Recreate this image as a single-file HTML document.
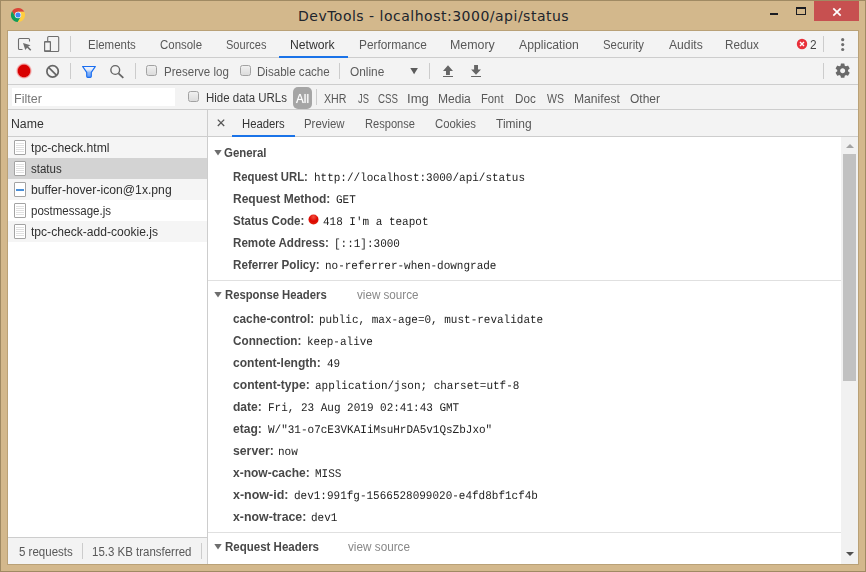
<!DOCTYPE html>
<html>
<head>
<meta charset="utf-8">
<title>DevTools - localhost:3000/api/status</title>
<style>
*{box-sizing:border-box;margin:0;padding:0}
html,body{width:866px;height:572px;overflow:hidden;background:#d3b88c}
body{font-family:"Liberation Sans",sans-serif;font-size:12px;color:#333;position:relative}
.a,.t,.m,.b{position:absolute;white-space:pre;display:block}
.t,.b{font-family:"Liberation Sans",sans-serif;font-size:12px;line-height:14px;color:#585858;transform-origin:0 50%}
.b{font-weight:bold;color:#484848}
.m{font-family:"Liberation Mono",monospace;font-size:11.7px;line-height:14px;color:#222;text-rendering:geometricPrecision;transform-origin:0 50%;transform:scaleX(0.9400)}
#frame{position:absolute;left:0;top:0;width:866px;height:572px;background:#d3b88c;border:1px solid #a08a63}
#title{position:absolute;left:298px;top:6px;white-space:pre;font-family:"DejaVu Sans","Liberation Sans",sans-serif;font-size:14px;letter-spacing:0.5px;color:#20242c;line-height:20px}
#content{position:absolute;left:8px;top:31px;width:850px;height:533px;background:#fff;outline:1px solid #b9a177}
.bar{position:absolute;left:8px;width:850px;background:#f3f3f3;border-bottom:1px solid #cdcdcd}
.v{position:absolute;width:1px;background:#ccc}
.cb{position:absolute;width:11px;height:11px;border:1px solid #a2a2a2;border-radius:2.5px;background:linear-gradient(#f0f0f0,#dcdcdc)}
.row{position:absolute;left:8px;width:199px;height:21px;background:#f5f5f5}
.fi{position:absolute;left:14px;width:12px;height:15px;border:1px solid #a3a3a3;border-radius:1px;background:#fff}
.fi i{position:absolute;left:1px;right:1px;height:1px;background:#e0e0e0}
.hl{position:absolute;left:208px;width:633px;height:1px;background:#e0e0e0}
.tri{position:absolute;width:0;height:0;border-left:3.5px solid transparent;border-right:3.5px solid transparent;border-top:6px solid #6e6e6e}
</style>
</head>
<body>
<div id="frame"></div>
<svg class="a" style="left:10px;top:7px" width="16" height="16" viewBox="0 0 16 16">
  <path d="M8.00 4.75 L14.31 4.75 A7.1 7.1 0 0 0 2.03 4.16 L5.19 9.62 Z" fill="#db4437"/>
  <path d="M10.81 9.62 L7.66 15.09 A7.1 7.1 0 0 0 14.31 4.75 L8.00 4.75 Z" fill="#ffcd40"/>
  <path d="M5.19 9.62 L2.03 4.16 A7.1 7.1 0 0 0 7.66 15.09 L10.81 9.62 Z" fill="#0f9d58"/>
  <circle cx="8" cy="8" r="3.25" fill="#f1f1f1"/>
  <circle cx="8" cy="8" r="2.5" fill="#4285f4"/>
</svg>
<div id="title">DevTools - localhost:3000/api/status</div>
<div class="a" style="left:770px;top:13px;width:8px;height:2px;background:#1a1c22"></div>
<div class="a" style="left:796px;top:7px;width:10px;height:8px;border:1px solid #1a1c22;border-top-width:2px"></div>
<div class="a" style="left:814px;top:1px;width:45px;height:20px;background:#c75050"></div>
<svg class="a" style="left:831.9px;top:6.9px" width="10" height="10" viewBox="0 0 10 10"><path d="M1.3 1.3 L8.7 8.7 M8.7 1.3 L1.3 8.7" stroke="#fff" stroke-width="1.7" fill="none"/></svg>

<div id="content"></div>
<div class="bar" style="top:31px;height:27px"></div>
<div class="bar" style="top:58px;height:27px"></div>
<div class="bar" style="top:85px;height:25px"></div>
<div class="bar" style="top:110px;height:27px"></div>

<!-- tab bar icons -->
<svg class="a" style="left:16px;top:35px" width="48" height="18" viewBox="0 0 48 18">
  <path d="M6.5 14.5 H3.5 a1 1 0 0 1 -1 -1 V4.5 a1 1 0 0 1 1 -1 H12.5 a1 1 0 0 1 1 1 V6.5" fill="none" stroke="#6e6e6e" stroke-width="1.1"/>
  <path d="M7 8 L14.5 10.2 L12.2 11.6 L15.3 14.7 L14.2 15.8 L11.1 12.7 L9.3 15 Z" fill="#6e6e6e"/>
  <rect x="31.7" y="1.5" width="11" height="15" rx="1" fill="none" stroke="#6e6e6e" stroke-width="1.1"/>
  <rect x="28" y="6" width="7" height="11" rx="1" fill="#6e6e6e"/>
  <rect x="29.2" y="7.6" width="4.6" height="7.6" fill="#f3f3f3"/>
</svg>
<div class="v" style="left:70px;top:36px;height:16px"></div>
<div class="a" style="left:279px;top:56px;width:69px;height:2px;background:#1a73e8"></div>
<svg class="a" style="left:796px;top:38px" width="12" height="12" viewBox="0 0 12 12"><circle cx="6" cy="6" r="5.2" fill="#e8303a"/><path d="M4 4 L8 8 M8 4 L4 8" stroke="#fff" stroke-width="1.4"/></svg>
<div class="v" style="left:823px;top:36px;height:16px"></div>
<svg class="a" style="left:840px;top:37px" width="6" height="16" viewBox="0 0 6 16"><circle cx="2.7" cy="2.7" r="1.6" fill="#6e6e6e"/><circle cx="2.7" cy="7.6" r="1.6" fill="#6e6e6e"/><circle cx="2.7" cy="12.5" r="1.6" fill="#6e6e6e"/></svg>

<!-- toolbar icons -->
<svg class="a" style="left:14px;top:60px" width="114" height="22" viewBox="-2 -2 114 22">
  <defs>
    <radialGradient id="rec" cx="0.5" cy="0.5" r="0.5"><stop offset="0.7" stop-color="#d80000"/><stop offset="0.77" stop-color="#e55" stop-opacity="0.9"/><stop offset="0.88" stop-color="#ee9090" stop-opacity="0.5"/><stop offset="1" stop-color="#f3c0c0" stop-opacity="0"/></radialGradient>
    <linearGradient id="fun" x1="0" y1="0" x2="0" y2="1"><stop offset="0" stop-color="#f4f6fb"/><stop offset="0.3" stop-color="#e3ecfb"/><stop offset="0.55" stop-color="#8db8f8"/><stop offset="1" stop-color="#5a97f6"/></linearGradient>
  </defs>
  <circle cx="8" cy="8.9" r="8.3" fill="url(#rec)"/>
  <circle cx="36.6" cy="9.4" r="5.7" fill="none" stroke="#666" stroke-width="1.7"/>
  <path d="M32.6 5.4 L40.6 13.4" stroke="#666" stroke-width="1.7"/>
  <path d="M66.6 4.45 H79.4 L75.3 10.4 V14.3 a1 1 0 0 1 -1 1 H71.7 a1 1 0 0 1 -1 -1 V10.4 Z" fill="url(#fun)" stroke="#1a6ef0" stroke-width="1.15" stroke-linejoin="round"/>
  <circle cx="99.25" cy="8" r="4.4" fill="none" stroke="#666" stroke-width="1.4"/>
  <path d="M102.5 11.4 L107.3 15.9" stroke="#666" stroke-width="1.8"/>
</svg>
<div class="v" style="left:70px;top:63px;height:16px"></div>
<div class="v" style="left:135px;top:63px;height:16px"></div>
<div class="cb" style="left:146px;top:65px"></div>
<div class="cb" style="left:240px;top:65px"></div>
<div class="v" style="left:339px;top:63px;height:16px"></div>
<svg class="a" style="left:409.7px;top:68px" width="9" height="7" viewBox="0 0 9 7"><path d="M0.3 0 H7.9 L4.1 6.2 Z" fill="#5c5c5c"/></svg>
<div class="v" style="left:429px;top:63px;height:16px"></div>
<svg class="a" style="left:442px;top:65px" width="40" height="13" viewBox="0 0 40 13">
  <path d="M6 0.3 L11 5.9 H7.9 V9.9 H4 V5.9 H1 Z M1 10.9 H11 V12 H1 Z" fill="#666"/>
  <path d="M34 9.7 L39 4.4 H36 V0.1 H32.1 V4.4 H29.1 Z M29.1 10.9 H39 V12 H29.1 Z" fill="#666"/>
</svg>
<div class="v" style="left:823px;top:63px;height:16px"></div>
<svg class="a" style="left:833.5px;top:62.2px" width="17.3" height="17.3" viewBox="0 0 24 24"><path fill="#6a6a6a" d="M19.43 12.98c.04-.32.07-.64.07-.98s-.03-.66-.07-.98l2.11-1.65c.19-.15.24-.42.12-.64l-2-3.46c-.12-.22-.39-.3-.61-.22l-2.49 1c-.52-.4-1.08-.73-1.69-.98l-.38-2.65A.488.488 0 0 0 14 2h-4c-.25 0-.46.18-.49.42l-.38 2.65c-.61.25-1.17.59-1.69.98l-2.49-1c-.23-.09-.49 0-.61.22l-2 3.46c-.13.22-.07.49.12.64l2.11 1.65c-.04.32-.07.65-.07.98s.03.66.07.98l-2.11 1.65c-.19.15-.24.42-.12.64l2 3.46c.12.22.39.3.61.22l2.49-1c.52.4 1.08.73 1.69.98l.38 2.65c.03.24.24.42.49.42h4c.25 0 .46-.18.49-.42l.38-2.65c.61-.25 1.17-.59 1.69-.98l2.49 1c.23.09.49 0 .61-.22l2-3.46c.12-.22.07-.49-.12-.64l-2.11-1.65zM12 15.5c-1.93 0-3.500-1.57-3.500-3.500s1.570-3.500 3.500-3.500 3.500 1.570 3.500 3.500-1.570 3.500-3.500 3.500z"/></svg>

<!-- filter bar -->
<div class="a" style="left:12px;top:88px;width:163px;height:18px;background:#fff"></div>
<div class="cb" style="left:188px;top:91px"></div>
<div class="a" style="left:293px;top:87px;width:19px;height:22px;border-radius:5px;background:#a5a5a5"></div>
<div class="v" style="left:316px;top:89px;height:16px"></div>

<!-- sidebar -->
<div class="row" style="top:137px"></div>
<div class="row" style="top:158px;background:#d3d3d3"></div>
<div class="row" style="top:179px"></div>
<div class="row" style="top:221px"></div>
<div class="fi" style="top:140px"><i style="top:2px"></i><i style="top:4px"></i><i style="top:6px"></i><i style="top:8px"></i><i style="top:10px"></i></div>
<div class="fi" style="top:161px"><i style="top:2px"></i><i style="top:4px"></i><i style="top:6px"></i><i style="top:8px"></i><i style="top:10px"></i></div>
<div class="fi" style="top:182px"><i style="top:6px;height:2px;background:#4a8fd8;left:1px;right:1px"></i></div>
<div class="fi" style="top:203px"><i style="top:2px"></i><i style="top:4px"></i><i style="top:6px"></i><i style="top:8px"></i><i style="top:10px"></i></div>
<div class="fi" style="top:224px"><i style="top:2px"></i><i style="top:4px"></i><i style="top:6px"></i><i style="top:8px"></i><i style="top:10px"></i></div>
<div class="v" style="left:207px;top:110px;height:454px;background:#cdcdcd"></div>
<div class="a" style="left:8px;top:537px;width:199px;height:27px;background:#f3f3f3;border-top:1px solid #cdcdcd"></div>
<div class="v" style="left:82px;top:543px;height:16px"></div>
<div class="v" style="left:201px;top:543px;height:16px"></div>

<!-- detail pane -->
<svg class="a" style="left:216px;top:118px" width="10" height="10" viewBox="0 0 10 10"><path d="M1.8 1.6 L8.2 8 M8.2 1.6 L1.8 8" stroke="#555" stroke-width="1.3" fill="none"/></svg>
<div class="a" style="left:232px;top:135px;width:63px;height:2px;background:#1a73e8"></div>
<svg class="a" style="left:213.5px;top:150px" width="9" height="7" viewBox="0 0 9 7"><path d="M0.3 0 H7.7 L4.0 5.6 Z" fill="#6e6e6e"/></svg>
<svg class="a" style="left:213.5px;top:292px" width="9" height="7" viewBox="0 0 9 7"><path d="M0.3 0 H7.7 L4.0 5.6 Z" fill="#6e6e6e"/></svg>
<svg class="a" style="left:213.5px;top:544px" width="9" height="7" viewBox="0 0 9 7"><path d="M0.3 0 H7.7 L4.0 5.6 Z" fill="#6e6e6e"/></svg>
<div class="hl" style="top:280px"></div>
<div class="hl" style="top:532px"></div>
<svg class="a" style="left:308.45px;top:214.3px" width="11" height="11" viewBox="0 0 11 11"><defs><radialGradient id="rg" cx="0.5" cy="0.25" r="0.8"><stop offset="0" stop-color="#f4503e"/><stop offset="0.55" stop-color="#dc0500"/><stop offset="1" stop-color="#e02a10"/></radialGradient></defs><circle cx="5.5" cy="5.5" r="5" fill="url(#rg)"/></svg>

<!-- scrollbar -->
<div class="a" style="left:841px;top:137px;width:17px;height:427px;background:#f1f1f1"></div>
<div class="a" style="left:843px;top:154px;width:13px;height:227px;background:#c1c1c1"></div>
<div class="a" style="left:845.5px;top:144px;width:0;height:0;border-left:4px solid transparent;border-right:4px solid transparent;border-bottom:4px solid #a3a3a3"></div>
<div class="a" style="left:845.5px;top:552px;width:0;height:0;border-left:4px solid transparent;border-right:4px solid transparent;border-top:4px solid #505050"></div>

<div id="tx" style="position:absolute;left:0;top:0;width:866px;height:572px;will-change:transform">
<span class="t" style="left:88.2px;top:38px;transform:scaleX(0.956)">Elements</span>
<span class="t" style="left:160.0px;top:38px;transform:scaleX(0.954)">Console</span>
<span class="t" style="left:226.0px;top:38px;transform:scaleX(0.920)">Sources</span>
<span class="t" style="left:290.2px;top:38px;transform:scaleX(1.016);color:#333">Network</span>
<span class="t" style="left:359.2px;top:38px;transform:scaleX(0.987)">Performance</span>
<span class="t" style="left:450.2px;top:38px;transform:scaleX(1.034)">Memory</span>
<span class="t" style="left:519.0px;top:38px;transform:scaleX(1.017)">Application</span>
<span class="t" style="left:603.0px;top:38px;transform:scaleX(0.946)">Security</span>
<span class="t" style="left:668.7px;top:38px;transform:scaleX(1.013)">Audits</span>
<span class="t" style="left:724.7px;top:38px;transform:scaleX(0.975)">Redux</span>
<span class="t" style="left:810.4px;top:38px;transform:scaleX(0.987);color:#444">2</span>
<span class="t" style="left:164.2px;top:65px;transform:scaleX(0.962);color:#5c5c5c">Preserve log</span>
<span class="t" style="left:257.3px;top:65px;transform:scaleX(0.965);color:#5c5c5c">Disable cache</span>
<span class="t" style="left:349.7px;top:65px;transform:scaleX(0.989);color:#5c5c5c">Online</span>
<span class="t" style="left:206.2px;top:91px;transform:scaleX(0.955);color:#3a3a3a">Hide data URLs</span>
<span class="t" style="left:296.0px;top:92px;transform:scaleX(0.974);color:#fff;text-shadow:0 0 1px rgba(255,255,255,.7)">All</span>
<span class="t" style="left:324.1px;top:92px;transform:scaleX(0.888)">XHR</span>
<span class="t" style="left:357.7px;top:92px;transform:scaleX(0.780)">JS</span>
<span class="t" style="left:378.0px;top:92px;transform:scaleX(0.810)">CSS</span>
<span class="t" style="left:407.3px;top:92px;transform:scaleX(1.089)">Img</span>
<span class="t" style="left:438.3px;top:92px;transform:scaleX(1.004)">Media</span>
<span class="t" style="left:481.3px;top:92px;transform:scaleX(0.937)">Font</span>
<span class="t" style="left:515.2px;top:92px;transform:scaleX(0.970)">Doc</span>
<span class="t" style="left:547.0px;top:92px;transform:scaleX(0.879)">WS</span>
<span class="t" style="left:574.2px;top:92px;transform:scaleX(1.010)">Manifest</span>
<span class="t" style="left:630.0px;top:92px">Other</span>
<span class="t" style="left:14.2px;top:92px;transform:scaleX(1.043);color:#777">Filter</span>
<span class="t" style="left:10.7px;top:117px;transform:scaleX(1.023);color:#333">Name</span>
<span class="t" style="left:242.0px;top:117px;transform:scaleX(0.941);color:#333">Headers</span>
<span class="t" style="left:304.2px;top:117px;transform:scaleX(0.949)">Preview</span>
<span class="t" style="left:365.0px;top:117px;transform:scaleX(0.925)">Response</span>
<span class="t" style="left:435.0px;top:117px;transform:scaleX(0.946)">Cookies</span>
<span class="t" style="left:496.0px;top:117px">Timing</span>
<span class="t" style="left:31.0px;top:141px;transform:scaleX(1.015);color:#303030">tpc-check.html</span>
<span class="t" style="left:31.0px;top:162px;transform:scaleX(0.959);color:#303030">status</span>
<span class="t" style="left:31.0px;top:183px;transform:scaleX(1.014);color:#303030">buffer-hover-icon@1x.png</span>
<span class="t" style="left:31.0px;top:204px;transform:scaleX(0.960);color:#303030">postmessage.js</span>
<span class="t" style="left:31.0px;top:225px;transform:scaleX(1.007);color:#303030">tpc-check-add-cookie.js</span>
<span class="t" style="left:18.7px;top:545px;transform:scaleX(0.960)">5 requests</span>
<span class="t" style="left:92.1px;top:545px;transform:scaleX(0.956)">15.3 KB transferred</span>
<span class="b" style="left:224.1px;top:146px;transform:scaleX(0.951)">General</span>
<span class="b" style="left:225.0px;top:288px;transform:scaleX(0.941)">Response Headers</span>
<span class="b" style="left:225.0px;top:540px;transform:scaleX(0.959)">Request Headers</span>
<span class="t" style="left:357.0px;top:288px;transform:scaleX(0.971);color:#888">view source</span>
<span class="t" style="left:348.1px;top:540px;transform:scaleX(0.979);color:#888">view source</span>
<span class="b" style="left:233.0px;top:170px;transform:scaleX(0.943)">Request URL:</span>
<span class="m" style="left:314.1px;top:171px">http://localhost:3000/api/status</span>
<span class="b" style="left:233.0px;top:192px">Request Method:</span>
<span class="m" style="left:336.0px;top:193px">GET</span>
<span class="b" style="left:233.0px;top:214px;transform:scaleX(0.964)">Status Code:</span>
<span class="m" style="left:323.2px;top:215px">418 I'm a teapot</span>
<span class="b" style="left:233.0px;top:236px;transform:scaleX(0.969)">Remote Address:</span>
<span class="m" style="left:334.3px;top:237px">[::1]:3000</span>
<span class="b" style="left:233.0px;top:258px;transform:scaleX(0.970)">Referrer Policy:</span>
<span class="m" style="left:325.2px;top:259px">no-referrer-when-downgrade</span>
<span class="b" style="left:233.0px;top:312px;transform:scaleX(0.982)">cache-control:</span>
<span class="m" style="left:319.2px;top:313px">public, max-age=0, must-revalidate</span>
<span class="b" style="left:233.0px;top:334px;transform:scaleX(0.977)">Connection:</span>
<span class="m" style="left:307.0px;top:335px">keep-alive</span>
<span class="b" style="left:233.0px;top:356px;transform:scaleX(1.005)">content-length:</span>
<span class="m" style="left:327.3px;top:357px">49</span>
<span class="b" style="left:233.0px;top:378px;transform:scaleX(1.009)">content-type:</span>
<span class="m" style="left:315.0px;top:379px">application/json; charset=utf-8</span>
<span class="b" style="left:233.0px;top:400px;transform:scaleX(1.006)">date:</span>
<span class="m" style="left:267.8px;top:401px">Fri, 23 Aug 2019 02:41:43 GMT</span>
<span class="b" style="left:233.0px;top:422px;transform:scaleX(1.006)">etag:</span>
<span class="m" style="left:267.5px;top:423px">W/"31-o7cE3VKAIiMsuHrDA5v1QsZbJxo"</span>
<span class="b" style="left:233.0px;top:444px;transform:scaleX(1.020)">server:</span>
<span class="m" style="left:278.1px;top:445px">now</span>
<span class="b" style="left:233.0px;top:466px">x-now-cache:</span>
<span class="m" style="left:315.0px;top:467px">MISS</span>
<span class="b" style="left:233.0px;top:488px;transform:scaleX(1.039)">x-now-id:</span>
<span class="m" style="left:294.0px;top:489px">dev1:991fg-1566528099020-e4fd8bf1cf4b</span>
<span class="b" style="left:233.0px;top:510px;transform:scaleX(1.028)">x-now-trace:</span>
<span class="m" style="left:310.8px;top:511px">dev1</span>
</div>
</body>
</html>
